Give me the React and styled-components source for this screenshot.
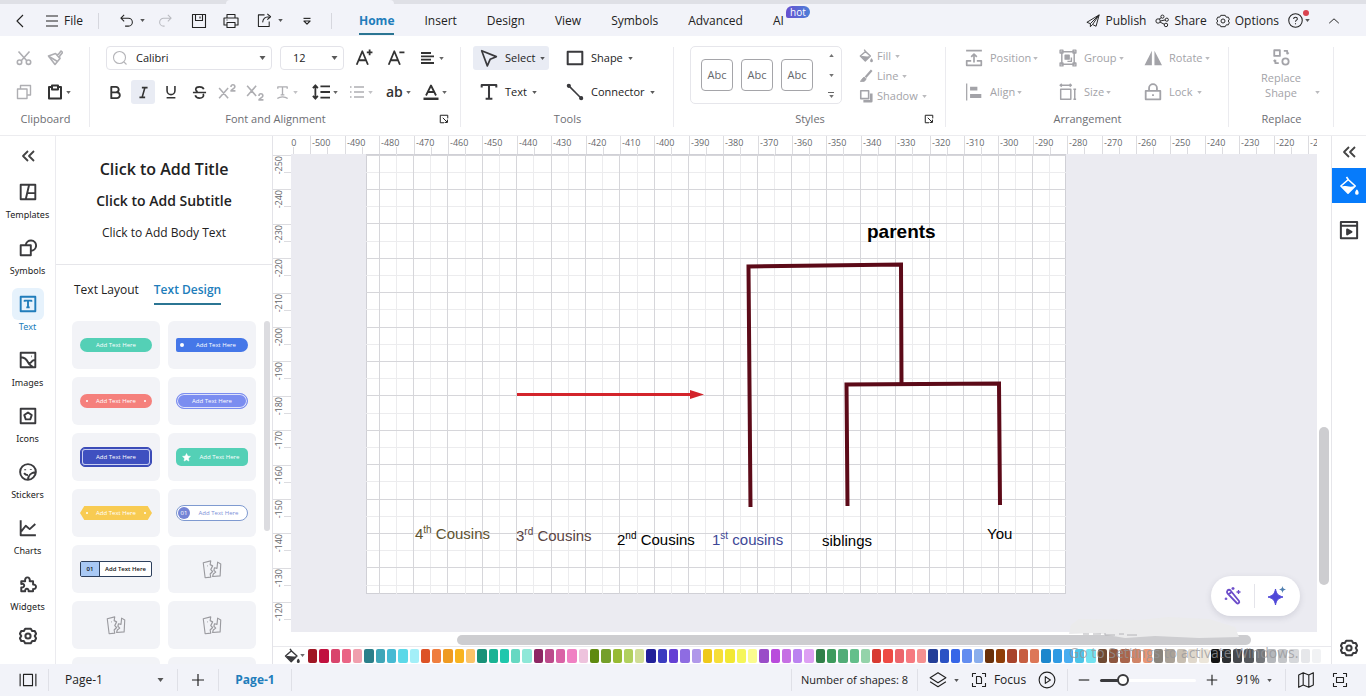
import React, { useState } from 'react';
import styled, { createGlobalStyle, css } from 'styled-components';

/* ---------- icons, all drawn on a 16 x 16 box ---------- */

const ICONS = {
  back: <path d="M11 2 5 8l6 6" />,
  menu: <path d="M2 3h12M2 8h12M2 13h12" />,
  undo: <path d="M5.5 2 2 5.5 5.5 9M2 5.5h8a4 4 0 0 1 0 8.5H6.5" />,
  redo: <path d="M10.5 2 14 5.5 10.5 9M14 5.5H6A4 4 0 0 0 6 14h1" />,
  save: <path d="M1.5 1.5h13v13h-13zM4.5 1.5v6h7v-6M9 3.5v2" />,
  print: <path d="M4 5V1.5h8V5M4 12H1V5h14v7h-3M4 9.5h8v5H4zM3.5 7h1" />,
  export: <path d="M8 2H1.500v12.500h11.500V9M6 10c.3-4 2.500-6 7-6M11 1l3.500 3L11 7" />,
  customize: (
    <>
      <path d="M4 5h8" />
      <path d="m4.500 8 3.500 3.500L11.500 8z" />
    </>
  ),
  publish: <path d="M15 1 1 9.500l4 1.500v3.500l2.500-2.500 4 2zM15 1 5 11M7.500 12 15 1" />,
  share: (
    <>
      <circle cx="3.500" cy="8" r="2.500" />
      <circle cx="12.500" cy="12.500" r="2" />
      <circle cx="8.500" cy="3" r="1.800" />
      <circle cx="13.500" cy="6.500" r="1.800" />
      <path d="m6 8 5.700-1.200M5.700 9.200l5 2.600M4.700 5.800l2.500-1.500" />
    </>
  ),
  gear: (
    <>
      <path d="M5.500 1.500 4.300 3.600H2L.8 6 2 8 .8 10 2 12.400h2.300l1.200 2.100h5l1.200-2.100H14L15.200 10 14 8l1.200-2L14 3.600h-2.300l-1.200-2.100z" />
      <circle cx="8" cy="8" r="2.300" />
    </>
  ),
  help: (
    <>
      <circle cx="8" cy="8" r="7.200" />
      <path d="M6 6.400C6 5 7 4.500 8 4.500s2 .6 2 1.800c0 1.300-2 1.500-2 3M8 11v1" />
    </>
  ),
  up: <path d="m2.500 10.500 5.500-5 5.500 5" />,
  cut: (
    <>
      <path d="m2.500 1.500 8.500 9.500M13.500 1.500 5 11" />
      <circle cx="3.500" cy="12.200" r="2.200" />
      <circle cx="12.500" cy="12.200" r="2.200" />
    </>
  ),
  brush: (
    <>
      <path d="M1.500 6 8.500 3.500l4.500 5-5 6z" />
      <path d="m9.500 4.500 2-.2L14 1l1.500 1.500-2.800 3.500-.2 2.500M2 6.500l8.500 5" />
    </>
  ),
  copy: <path d="M1.500 5h9.500v9.500H1.500zM4.500 5V1.500h10V11H11" />,
  paste: <path d="M5 3H2v11.500h12V3h-3M5 1.500h6v4H5z" />,
  search: (
    <>
      <circle cx="7.500" cy="7.500" r="6" />
      <path d="m12 12 2.500 2.500" />
    </>
  ),
  fontUp: <path d="m1.500 14 5-12 5 12M3.300 10h6.400M13 .500v5M10.500 3h5" />,
  fontDown: <path d="m1.500 14 5-12 5 12M3.300 10h6.400M11 3h4.500" />,
  align: <path d="M1 3h10M1 6.300h13M1 9.600h10M1 13h13" />,
  bold: <path d="M3.500 2h5a2.900 2.900 0 0 1 0 5.800h-5zM3.500 7.800h6a3.100 3.100 0 0 1 0 6.200h-6z" />,
  italic: <path d="M6 2h7M3 14h7M9.700 2 6.300 14" />,
  underline: <path d="M3.500 1v5.500a4.500 4.500 0 0 0 9 0V1M3 14.500h10" />,
  strike: <path d="M12.500 4.500C12 2.500 10.300 2 8 2 5.500 2 4 3 4 4.800c0 1.200.8 1.900 2 2.400M1 8h14M12 9.500c1 2.800-.8 4.500-4 4.500-2.500 0-4-.9-4.500-3" />,
  sup: <path d="m1 4.500 8 9M9 4.500l-8 9M11.500 3.500c0-2.500 3.500-2.500 3.500 0 0 1.200-3.500 2.500-3.500 3.500H15.500" />,
  sub: <path d="m1 2.500 8 9M9 2.500l-8 9M11.500 11.500c0-2.500 3.500-2.500 3.500 0 0 1.200-3.500 2.500-3.500 3.500H15.500" />,
  textCurve: <path d="M3 4V2h10v2M8 2v8.500M6 10.500h4M2.500 14.500c3-2.500 8-2.500 11 0" />,
  spacing: <path d="M3 2v12M.800 4.500 3 2l2.200 2.500M.800 11.500 3 14l2.200-2.500M7.500 3H16M7.500 8H16M7.500 13H16" />,
  list: <path d="M1 3h1.500M1 8h1.500M1 13h1.500M5 3h10M5 8h10M5 13h10" />,
  fontColor: (
    <>
      <path d="m3 11.500 5-10 5 10M4.800 8h6.400" />
      <path d="M.500 14.800h15" strokeWidth="2.500" />
    </>
  ),
  cursor: <path d="m1.500 1.500 13 5.300-5.500 2.400L6.500 15z" />,
  rect: <path d="M1.500 2.500h13v11h-13z" />,
  text: <path d="M1.500 4V1.800h13V4M8 1.800V14M5 14h6" />,
  connector: (
    <>
      <path d="m3 3 10.500 10.500" strokeWidth="1.400" />
      <circle cx="2.500" cy="2.500" r="1.300" fill="currentColor" />
      <circle cx="13.500" cy="13.500" r="1.300" fill="currentColor" />
    </>
  ),
  bucket: (
    <>
      <path d="M6 .800 7.500 3l5.500 5-5.800 5.800L1.500 8 7.500 2.800" />
      <path d="M2 8.500c3-1.500 6 1 10.500-.5L7.200 13.500z" fill="currentColor" stroke="none" />
      <path d="M14.300 11.500c-1.300 2-.8 2.800 0 2.800s1.300-.8 0-2.800z" fill="currentColor" />
    </>
  ),
  pen: (
    <>
      <path d="m14.500 1.500-7 8" strokeWidth="2.500" />
      <path d="M6.500 9.500c-3 0-2.500 3-5 4.500 4 .8 6.500-.5 6.500-3z" fill="currentColor" />
    </>
  ),
  shadow: (
    <>
      <path d="M2 2h9v9H2z" />
      <path d="M5 14h9V5" strokeWidth="3" />
    </>
  ),
  position: <path d="M1 1.500h14M8 12V4.500M5.500 7 8 4.500 10.500 7M5.500 10.500h-4v4h13v-4h-4" />,
  group: (
    <>
      <path d="M2.500 2.500h11v11h-11z" />
      <path d="M5.500 5.500H9v3.500H5.500z" fill="currentColor" />
      <path d="M11 7.500v3.500H7.500" />
      <path d="M1 1h2.500v2.500H1zM12.500 1H15v2.500h-2.500zM1 12.500h2.500V15H1zM12.500 12.500H15V15h-2.500z" />
    </>
  ),
  rotate: (
    <>
      <path d="M7 1.500V14.500H.500z" fill="currentColor" stroke="none" />
      <path d="M9.300 1.500V14.500H16z" fill="currentColor" stroke="none" />
    </>
  ),
  alignLeft: (
    <>
      <path d="M1.500.500v15" />
      <path d="M4.500 5H11M4.500 11.500H14.500" strokeWidth="3.500" />
    </>
  ),
  size: <path d="M1.500 5.500h9v9h-9zM1 2h10M2.500.800 1 2l1.500 1.200M9.500.800 11 2 9.500 3.200M14 5.500v9M12.800 5.500h2.400M12.800 14.500h2.400" />,
  lock: <path d="M1.500 7h13v7.500h-13zM4.500 7V4.500a3.500 3.500 0 0 1 7 0V7M8 10v1.500" />,
  replace: (
    <>
      <path d="M2 2h5v5H2z" />
      <circle cx="12" cy="12" r="2.800" />
      <path d="M10.500 2.500h3v3M13.500 5.500l1.300-1.500M6 13.500H3v-3M3 10.500 1.500 12" />
    </>
  ),
  launcher: <path d="M8 14H2V2h12v5M6 6l7 7M13.500 9v4.500H9" />,
  collapse: <path d="M8 3 3 8l5 5M14 3 9 8l5 5" />,
  templates: <path d="M1.500 1.500h13v13h-13zM9 1.500 6 14.500M7.500 9h7" />,
  symbols: (
    <>
      <path d="M1.500 5.500H10.500v9h-9z" />
      <path d="M6 5.500a4.600 4.600 0 1 1 4.500 5" />
    </>
  ),
  textBox: (
    <>
      <path d="M1.500 1.500h13v13h-13z" />
      <path d="M5 6V5h6v1M8 5v6M6.500 11h3" />
    </>
  ),
  images: <path d="M1.500 1.500h13v13h-13zM2 5.500c3 .2 4.800 2 6 4.500s2.500 2.500 4 4M8.500 11c2 0 2.500-1 3-1.800s1.500-1.200 3-1.200M11 4.800h.500" />,
  iconsBox: <path d="M1.500 1.500h13v13h-13zM8 4.800l3.300 2.400-1.300 3.800H6L4.700 7.200z" />,
  stickers: (
    <>
      <path d="M15 8A7 7 0 1 0 8 15c0-3.500 2.500-6.500 7-7zM15 8c0 3.500-3.500 7-7 7" />
      <path d="M5.500 5.500v1M10.500 5.500v.8M4.500 9c.8 1.200 2 1.800 3.500 1.800" />
    </>
  ),
  charts: <path d="M1.500 1v13.500h13.500M2 11l4-5 3.500 3L14.500 4.500" />,
  widgets: <path d="M2 5.500h3.500C4.500 1 10.500 1 9.500 5.500h3v3c3.500-.5 3.500 4.500 0 4v2h-4c.5-3-3.500-3-3 0H2v-3.500c3.500.5 3.500-4 0-3z" />,
  pages: <path d="M4 3h8v10H4zM1 2.500v11M15 2.500v11" />,
  plus: <path d="M8 2v12M2 8h12" />,
  minus: <path d="M2 8h12" />,
  layers: <path d="m8 1.500 7 4.500-7 4.500L1 6zM1 9.500l7 4.500 7-4.500" />,
  focus: <path d="M1.500 5V1.500H5M11 1.500h3.500V5M14.500 11v3.500H11M5 14.500H1.500V11M5.500 4.500h3.500l1.500 1.500v5.500h-5z" />,
  play: (
    <>
      <circle cx="8" cy="8" r="7" />
      <path d="m6.500 5 4.500 3-4.500 3z" />
    </>
  ),
  map: <path d="m1.500 3.500 4-2 5 2 4-2v11l-4 2-5-2-4 2zM5.500 1.500v11M10.500 3.500v11" />,
  fit: <path d="M1.500 5V1.500H5M11 1.500h3.500V5M14.500 11v3.500H11M5 14.500H1.500V11M4.500 5.500h7v5h-7z" />,
  playBox: (
    <>
      <path d="M1.500 1.500h13v13h-13zM1.500 4.500h13" />
      <path d="m6.500 7.500 3.500 2-3.500 2z" fill="currentColor" />
    </>
  ),
  missing: <path d="m1 3 6-1.500-.500 3 2 1-1.500 3 1.500 1.500-2 2 .500 2.500-4.500.500zM10 7l2 .500.500-5L15 4l-.500 9.500-6 .500.500-2 2-1.500-1.500-1.500zM4 5.500h.500" />,
  star: <path d="m8 1 2 4.500 5 .500-3.700 3.300 1 5L8 12l-4.300 2.300 1-5L1 6l5-.500z" fill="currentColor" />,
};

const Svg = styled.svg`
  display: block;
  flex: none;
  width: ${(props) => props.$size}px;
  height: ${(props) => props.$size}px;
  fill: none;
  stroke: currentColor;
  stroke-width: ${(props) => props.$weight};
  stroke-linejoin: round;
`;

function Icon({ name, size = 16, weight = 1.1 }) {
  return (
    <Svg viewBox="0 0 16 16" $size={size} $weight={weight} aria-hidden="true">
      {ICONS[name]}
    </Svg>
  );
}

function Caret({ up, big }) {
  return (
    <CaretSvg viewBox="0 0 6 4" $big={big} aria-hidden="true">
      <path d={up ? 'M0 4h6L3 0z' : 'M0 0h6L3 4z'} />
    </CaretSvg>
  );
}

/* ---------- data ---------- */

const TABS = ['Home', 'Insert', 'Design', 'View', 'Symbols', 'Advanced', 'AI'];

const SIDE_ITEMS = [
  ['Templates', 'templates'],
  ['Symbols', 'symbols'],
  ['Text', 'textBox'],
  ['Images', 'images'],
  ['Icons', 'iconsBox'],
  ['Stickers', 'stickers'],
  ['Charts', 'charts'],
  ['Widgets', 'widgets'],
];

const DESIGNS = [
  'mint',
  'blue',
  'coral',
  'periwinkle',
  'indigo',
  'star',
  'ribbon',
  'numbered',
  'boxed',
  'none',
  'none',
  'none',
  'none',
  'none',
];

const SWATCHES = `
  9f1624 c1113f d9446c ea6485 f09fae 2b7f8a 3fa6b8 46bad3 5cd8e8 a3eff8
  dd5226 ef7e3f ef9a22 f8b31e fbc368 189178 1ab394 1fc7ad 66d8c2 8ee8d8
  8e2764 bc4a8b da62a6 f080c3 eec3dd 5f8a10 759f2a 97ba33 b1d05e d0dd96
  22209a 3b3bc0 6540d4 8e6ce2 b098ea efc91a f6de38 f2e833 f5f65a fbfb8e
  9a4dc8 b94bdc c66fe4 bb83f0 dda0f3 318049 3d9b5d 52ad78 63bf8b 94d3aa
  d83a32 ee4a44 ec656c f67980 f59090 253f98 2b52c4 3766e8 638df0 8aaeec
  6a310a 8f3e08 a8442c c75f42 dd7757 1d87cd 2f9ae3 48adf0 4cc4e8 73e2f0
  6f4a33 8d5640 a9654c d08467 ea9674 8a847c aaa298 c8bfb2 e0d8cc ece6da
  141414 2c2e31 46494d 54575b 75787c b5b8bc c4c6c9 d6d8db e6e7ea f1f2f4
`
  .trim()
  .split(/\s+/);

const range = (n) => Array.from({ length: n }, (_, i) => i);

// screen pixels per ten drawing units at 91% zoom
const STEP = 34.4;

// how many ruler labels fit beside the side panels and the toolbars
const columns = () => Math.floor((window.innerWidth - 305) / STEP) + 1;
const rows = () => Math.floor((window.innerHeight - 218) / STEP) + 1;

/* ---------- header ---------- */

function Header() {
  const [tab, setTab] = useState('Home');

  return (
    <>
      <WindowStrip>
        <WindowTab />
      </WindowStrip>
      <HeaderBar>
        <QuickButton $w={40} aria-label="Back">
          <Icon name="back" />
        </QuickButton>
        <FileButton>
          <Icon name="menu" />
          File
        </FileButton>
        <HeaderLine />
        <QuickButton $w={46} $end aria-label="Undo">
          <Icon name="undo" size={15} />
          <Caret />
        </QuickButton>
        <QuickButton $w={40} disabled aria-label="Redo">
          <Icon name="redo" size={15} />
        </QuickButton>
        <QuickButton $w={28} aria-label="Save">
          <Icon name="save" />
        </QuickButton>
        <QuickButton $w={36} aria-label="Print">
          <Icon name="print" />
        </QuickButton>
        <QuickButton $w={42} aria-label="Export">
          <Icon name="export" size={15} />
          <Caret />
        </QuickButton>
        <QuickButton $w={32} aria-label="Customize">
          <Icon name="customize" size={14} weight={1.3} />
        </QuickButton>
        <HeaderLine $gap />
        <Tabs>
          {TABS.map((name) => (
            <Tab key={name} $on={name === tab} onClick={() => setTab(name)}>
              {name}
              {name === 'AI' && <Hot>hot</Hot>}
            </Tab>
          ))}
        </Tabs>
        <HeaderActions>
          <Action>
            <Icon name="publish" size={14} />
            Publish
          </Action>
          <Action>
            <Icon name="share" size={14} />
            Share
          </Action>
          <Action>
            <Icon name="gear" size={14} />
            Options
          </Action>
          <HelpButton aria-label="Help">
            <Icon name="help" size={15} />
            <RedDot />
            <Caret />
          </HelpButton>
          <QuickButton $w={24} aria-label="Collapse ribbon">
            <Icon name="up" size={14} />
          </QuickButton>
        </HeaderActions>
      </HeaderBar>
    </>
  );
}

/* ---------- ribbon ---------- */

function Ribbon() {
  return (
    <RibbonBar>
      <Group $w={89}>
        <Rows>
          <Row $pad={11}>
            <Tool disabled aria-label="Cut">
              <Icon name="cut" weight={1.6} />
            </Tool>
            <ToolGap />
            <Tool disabled aria-label="Format painter">
              <Icon name="brush" weight={1.6} />
            </Tool>
          </Row>
          <Row $pad={11}>
            <Tool disabled aria-label="Copy">
              <Icon name="copy" weight={1.4} />
            </Tool>
            <ToolGap />
            <Tool $wide aria-label="Paste">
              <Icon name="paste" weight={2} />
              <Caret />
            </Tool>
          </Row>
        </Rows>
        <GroupName>Clipboard</GroupName>
      </Group>

      <Group $w={371}>
        <Rows>
          <Row $pad={16} $gap={8}>
            <Field $w={166}>
              <Pale>
                <Icon name="search" />
              </Pale>
              <FontInput aria-label="Font" defaultValue="Calibri" />
              <Caret big />
            </Field>
            <Field $w={64}>
              <PlainSelect aria-label="Font size" defaultValue="12">
                <option>11</option>
                <option>12</option>
                <option>14</option>
              </PlainSelect>
              <Caret big />
            </Field>
            <Tool aria-label="Increase font size">
              <Icon name="fontUp" size={18} weight={1.6} />
            </Tool>
            <Tool aria-label="Decrease font size">
              <Icon name="fontDown" size={18} weight={1.6} />
            </Tool>
            <Tool $wide aria-label="Paragraph alignment">
              <Icon name="align" weight={1.8} />
              <Caret />
            </Tool>
          </Row>
          <Row $pad={13} $gap={4}>
            <Tool aria-label="Bold">
              <Icon name="bold" size={15} weight={2} />
            </Tool>
            <Tool $on aria-label="Italic">
              <Icon name="italic" size={13} weight={2} />
            </Tool>
            <Tool aria-label="Underline">
              <Icon name="underline" size={14} weight={1.8} />
            </Tool>
            <Tool aria-label="Strikethrough">
              <Icon name="strike" size={15} weight={1.8} />
            </Tool>
            <Tool disabled aria-label="Superscript">
              <Icon name="sup" size={18} weight={1.4} />
            </Tool>
            <Tool disabled aria-label="Subscript">
              <Icon name="sub" size={18} weight={1.4} />
            </Tool>
            <Tool $wide disabled aria-label="Text direction">
              <Icon name="textCurve" size={15} weight={1.4} />
              <Caret />
            </Tool>
            <Tool $wide aria-label="Line spacing">
              <Icon name="spacing" size={18} weight={1.6} />
              <Caret />
            </Tool>
            <Tool $wide disabled aria-label="Bullets">
              <Icon name="list" weight={1.3} />
              <Caret />
            </Tool>
            <Tool $wide $strong>
              ab
              <Caret />
            </Tool>
            <Tool $wide aria-label="Font color">
              <Icon name="fontColor" weight={1.8} />
              <Caret />
            </Tool>
          </Row>
        </Rows>
        <GroupName>Font and Alignment</GroupName>
        <Launcher aria-label="Font settings">
          <Icon name="launcher" size={10} weight={1.6} />
        </Launcher>
      </Group>

      <Group $w={213}>
        <Rows>
          <Row $pad={12} $gap={10}>
            <Labelled $w={76} $on>
              <Icon name="cursor" size={18} weight={1.5} />
              Select
              <Caret />
            </Labelled>
            <Labelled>
              <Icon name="rect" weight={1.8} size={18} />
              Shape
              <Caret />
            </Labelled>
          </Row>
          <Row $pad={12} $gap={10}>
            <Labelled $w={76}>
              <Icon name="text" weight={1.8} size={18} />
              Text
              <Caret />
            </Labelled>
            <Labelled>
              <Icon name="connector" size={18} />
              Connector
              <Caret />
            </Labelled>
          </Row>
        </Rows>
        <GroupName>Tools</GroupName>
      </Group>

      <Group $w={272}>
        <StylesArea>
          <Gallery>
            <StyleBox>Abc</StyleBox>
            <StyleBox>Abc</StyleBox>
            <StyleBox>Abc</StyleBox>
            <GalleryArrows>
              <ArrowButton aria-label="Previous styles">
                <Caret up />
              </ArrowButton>
              <ArrowButton aria-label="Next styles">
                <Caret />
              </ArrowButton>
              <ArrowButton $more aria-label="More styles">
                <Caret />
              </ArrowButton>
            </GalleryArrows>
          </Gallery>
          <StyleList>
            <StyleItem disabled>
              <Icon name="bucket" size={14} weight={1.6} />
              Fill
              <Caret />
            </StyleItem>
            <StyleItem disabled>
              <Icon name="pen" size={14} />
              Line
              <Caret />
            </StyleItem>
            <StyleItem disabled>
              <Icon name="shadow" size={14} weight={1.8} />
              Shadow
              <Caret />
            </StyleItem>
          </StyleList>
        </StylesArea>
        <GroupName>Styles</GroupName>
        <Launcher aria-label="Style settings">
          <Icon name="launcher" size={10} weight={1.6} />
        </Launcher>
      </Group>

      <Group $w={283}>
        <Rows>
          <Row $pad={12}>
            <Labelled disabled $w={94} $tight>
              <Icon name="position" size={18} weight={1.5} />
              Position
              <Caret />
            </Labelled>
            <Labelled disabled $w={85} $tight>
              <Icon name="group" size={18} weight={1.3} />
              Group
              <Caret />
            </Labelled>
            <Labelled disabled $tight>
              <Icon name="rotate" size={18} />
              Rotate
              <Caret />
            </Labelled>
          </Row>
          <Row $pad={12}>
            <Labelled disabled $w={94} $tight>
              <Icon name="alignLeft" size={18} />
              Align
              <Caret />
            </Labelled>
            <Labelled disabled $w={85} $tight>
              <Icon name="size" size={18} weight={1.3} />
              Size
              <Caret />
            </Labelled>
            <Labelled disabled>
              <Icon name="lock" size={18} weight={1.6} />
              Lock
              <Caret />
            </Labelled>
          </Row>
        </Rows>
        <GroupName>Arrangement</GroupName>
      </Group>

      <Group $w={105}>
        <ReplaceButton disabled>
          <Icon name="replace" size={18} weight={1.6} />
          <ReplaceLabel>Replace Shape</ReplaceLabel>
          <Caret />
        </ReplaceButton>
        <GroupName>Replace</GroupName>
      </Group>
    </RibbonBar>
  );
}

/* ---------- left side ---------- */

function SideBar() {
  return (
    <Side>
      <SideTop $h={40} aria-label="Collapse">
        <Icon name="collapse" weight={1.8} />
      </SideTop>
      {SIDE_ITEMS.map(([name, icon]) => (
        <SideItem key={name} $on={name === 'Text'}>
          <SideIcon $on={name === 'Text'}>
            <Icon name={icon} size={18} weight={1.7} />
          </SideIcon>
          {name}
        </SideItem>
      ))}
      <SideGear aria-label="Settings">
        <Icon name="gear" size={18} weight={1.8} />
      </SideGear>
    </Side>
  );
}

function Design({ kind }) {
  if (kind === 'none') {
    return (
      <Card $empty>
        <Icon name="missing" size={20} weight={0.9} />
      </Card>
    );
  }
  return (
    <Card>
      <Banner $kind={kind}>
        {kind === 'blue' && <Bullet />}
        {(kind === 'coral' || kind === 'ribbon') && <Dot />}
        {kind === 'star' && <Icon name="star" size={9} />}
        {kind === 'numbered' && <Round>01</Round>}
        {kind === 'boxed' && <Square>01</Square>}
        <BannerText>Add Text Here</BannerText>
        {(kind === 'coral' || kind === 'ribbon') && <Dot />}
      </Banner>
    </Card>
  );
}

function TextPanel() {
  return (
    <Panel>
      <AddText>
        <AddTitle>Click to Add Title</AddTitle>
        <AddSubtitle>Click to Add Subtitle</AddSubtitle>
        <AddBody>Click to Add Body Text</AddBody>
      </AddText>
      <PanelTabs>
        <PanelTab>Text Layout</PanelTab>
        <PanelTab $on>Text Design</PanelTab>
      </PanelTabs>
      <DesignArea>
        <DesignGrid>
          {DESIGNS.map((kind, i) => (
            <Design key={i} kind={kind} />
          ))}
        </DesignGrid>
        <PanelThumb />
      </DesignArea>
    </Panel>
  );
}

/* ---------- drawing area ---------- */

function TopRuler() {
  return (
    <TopRulerSvg>
      {range(columns()).map((i) => {
        const x = Math.round(i * STEP) - 15;
        return (
          <g key={i}>
            <line x1={x + 0.5} x2={x + 0.5} y1="0" y2="18" />
            <line x1={x + 17.5} x2={x + 17.5} y1="11" y2="18" />
            <text x={x + 2} y="10">
              {i * 10 - 510}
            </text>
          </g>
        );
      })}
    </TopRulerSvg>
  );
}

function LeftRuler() {
  return (
    <LeftRulerSvg>
      {range(rows()).map((i) => {
        const y = Math.round(i * STEP) + 1;
        return (
          <g key={i}>
            <line x1="0" x2="18" y1={y + 0.5} y2={y + 0.5} />
            <line x1="11" x2="18" y1={y + 17.5} y2={y + 17.5} />
            <text transform={`translate(9 ${y + 1}) rotate(-90)`} textAnchor="end">
              {i * 10 - 250}
            </text>
          </g>
        );
      })}
    </LeftRulerSvg>
  );
}

function Sheet() {
  return (
    <Paper>
      <Drawing viewBox="0 0 700 440">
        <g stroke="#ececee" shapeRendering="crispEdges">
          {range(42).map((i) => (
            <line key={i} x1={13 + (i - 1) * (STEP / 2)} x2={13 + (i - 1) * (STEP / 2)} y2="440" />
          ))}
          {range(26).map((i) => (
            <line key={i} y1={1 + i * (STEP / 2)} y2={1 + i * (STEP / 2)} x2="700" />
          ))}
        </g>
        <g stroke="#d6d6da" shapeRendering="crispEdges">
          {range(20).map((i) => (
            <line key={i} x1={13 + i * STEP} x2={13 + i * STEP} y2="440" />
          ))}
          {range(13).map((i) => (
            <line key={i} y1={1 + i * STEP} y2={1 + i * STEP} x2="700" />
          ))}
        </g>
        <g fill="none" stroke="#5c0a18" strokeWidth="4">
          <path d="M384.500 353 382.500 112.500 535 110.500l.500 119" />
          <path d="M481.500 352 480.500 230.500 633 229.500l1 121.500" />
        </g>
        <path d="M151 240.500h176" stroke="#d3242b" strokeWidth="3" />
        <path d="m324 236 14 4.500-14 4.500z" fill="#d3242b" />
      </Drawing>
      <Note $x={501} $y={66} $big>
        parents
      </Note>
      <Note $x={49} $y={370} $color="#5e5330">
        4<sup>th</sup> Cousins
      </Note>
      <Note $x={150} $y={372} $color="#5a4444">
        3<sup>rd</sup> Cousins
      </Note>
      <Note $x={251} $y={376}>
        2<sup>nd</sup> Cousins
      </Note>
      <Note $x={346} $y={376} $color="#3c4796">
        1<sup>st</sup> cousins
      </Note>
      <Note $x={456} $y={377}>
        siblings
      </Note>
      <Note $x={621} $y={370}>
        You
      </Note>
    </Paper>
  );
}

function Workspace() {
  return (
    <Work>
      <TopRulerRow>
        <TopRuler />
      </TopRulerRow>
      <CanvasRow>
        <LeftRuler />
        <Canvas>
          <Sheet />
          <AiPill>
            <PillButton aria-label="AI wand">
              <svg width="20" height="20" viewBox="0 0 20 20" fill="none" stroke="#6b4bc9" strokeWidth="1.800">
                <path d="M4.500 4.500c1-1 2-1 3 0l8.500 10.500c1 1.500-1 3.200-2.300 2L4.500 7.500c-.8-1-.8-2 0-3zM5.500 8.500l3-2.500" />
                <path d="M10 1v3M8.500 2.500h3M15.500 4v4M13.500 6h4M3 11.500v2.500M1.700 12.800h2.600" strokeWidth="1.300" />
              </svg>
            </PillButton>
            <PillLine />
            <PillButton aria-label="AI assistant">
              <svg width="20" height="20" viewBox="0 0 20 20">
                <path d="M8.500 3c1 5 2.500 6.500 7.500 8-5 1.500-6.500 3-7.500 8-1-5-2.500-6.500-7.500-8 5-1.500 6.500-3 7.500-8z" fill="#5048d8" stroke="#5048d8" strokeLinejoin="round" />
                <path d="M15.500 0c.5 2.300 1.200 3 3.500 3.500-2.300.5-3 1.200-3.500 3.500-.5-2.300-1.200-3-3.500-3.500 2.300-.5 3-1.200 3.500-3.500z" fill="#4f7fb0" />
              </svg>
            </PillButton>
          </AiPill>
        </Canvas>
        <VScroll>
          <VThumb />
        </VScroll>
      </CanvasRow>
      <HScroll>
        <HThumb />
      </HScroll>
      <Palette>
        <PaletteButton aria-label="Fill color">
          <Icon name="bucket" weight={1.4} />
          <Caret />
        </PaletteButton>
        <Swatches>
          {SWATCHES.map((hex, i) => (
            <Swatch key={i} aria-label={`#${hex}`} style={{ background: `#${hex}` }} />
          ))}
        </Swatches>
      </Palette>
      <Watermark>
        <svg width="172" height="22" viewBox="0 0 172 22" aria-hidden="true">
          <path d="M2 8 10 2l60 1 30-3 40 2 26 8 4 10-40 1-44-2-30 2-30-5-26 1z" fill="#ebebec" />
          <path d="M14 17h6M24 17h8M36 16v2h10M50 17h5M58 18h10" stroke="#b4b4b8" fill="none" />
        </svg>
        <span>Go to Settings to activate Windows.</span>
      </Watermark>
    </Work>
  );
}

/* ---------- status bar ---------- */

function StatusBar() {
  const [zoom, setZoom] = useState(20);

  return (
    <Status>
      <StatusCell $w={49}>
        <IndentedButton aria-label="Page thumbnails">
          <Icon name="pages" size={18} weight={1} />
        </IndentedButton>
      </StatusCell>
      <StatusCell $w={129} $start={16}>
        <PageSelect aria-label="Page" defaultValue="Page-1">
          <option>Page-1</option>
        </PageSelect>
        <Caret big />
      </StatusCell>
      <StatusCell $w={41}>
        <StatusButton aria-label="Add page">
          <Icon name="plus" weight={1.2} />
        </StatusButton>
      </StatusCell>
      <StatusCell $w={73}>
        <PageTab href="#page-1">Page-1</PageTab>
      </StatusCell>
      <Spacer />
      <StatusCell $w={127} $line>
        <Count>Number of shapes: 8</Count>
      </StatusCell>
      <StatusCell $w={150}>
        <StatusButton aria-label="Layers">
          <Icon name="layers" size={18} weight={1} />
          <Caret />
        </StatusButton>
        <StatusButton>
          <Icon name="focus" size={16} />
          Focus
        </StatusButton>
        <StatusButton aria-label="Present">
          <Icon name="play" size={18} weight={1} />
        </StatusButton>
      </StatusCell>
      <StatusCell $w={218} $start={9}>
        <StatusButton aria-label="Zoom out">
          <Icon name="minus" size={14} weight={1.3} />
        </StatusButton>
        <Zoom
          type="range"
          aria-label="Zoom"
          value={zoom}
          onChange={(e) => setZoom(e.target.value)}
          style={{ '--fill': `${zoom}%` }}
        />
        <StatusButton aria-label="Zoom in">
          <Icon name="plus" size={14} weight={1.3} />
        </StatusButton>
        <IndentedButton>
          91%
          <Caret />
        </IndentedButton>
      </StatusCell>
      <StatusCell $w={80} $start={11} $last>
        <StatusButton aria-label="Overview">
          <Icon name="map" size={18} weight={1} />
        </StatusButton>
        <IndentedButton aria-label="Fit to window">
          <Icon name="fit" />
        </IndentedButton>
      </StatusCell>
    </Status>
  );
}

function App() {
  return (
    <>
      <GlobalStyle />
      <Window>
        <Header />
        <Ribbon />
        <Main>
          <SideBar />
          <TextPanel />
          <Workspace />
          <RightBar>
            <SideTop $h={32} aria-label="Expand">
              <Icon name="collapse" weight={1.8} />
            </SideTop>
            <RightButton $on aria-label="Fill">
              <Icon name="bucket" size={20} weight={1.3} />
            </RightButton>
            <RightButton aria-label="Slides">
              <Icon name="playBox" size={20} weight={1.6} />
            </RightButton>
            <Spacer />
            <SideGear aria-label="Settings">
              <Icon name="gear" size={18} weight={1.8} />
            </SideGear>
          </RightBar>
        </Main>
        <StatusBar />
      </Window>
    </>
  );
}

/* ---------- styles ---------- */

const GlobalStyle = createGlobalStyle`
  * {
    box-sizing: border-box;
  }

  body {
    margin: 0;
    color: #222;
    background: #fff;
    font: 12px/16px "Open Sans", "Noto Sans", sans-serif;
  }

  button,
  input,
  select {
    margin: 0;
    padding: 0;
    border: 0;
    background: none;
    color: inherit;
    font: inherit;
  }
`;

const row = css`
  display: flex;
  align-items: center;
`;

const Window = styled.div`
  display: flex;
  flex-direction: column;
  height: 100vh;
  overflow: hidden;
`;

const Spacer = styled.div`
  flex: 1;
`;

const CaretSvg = styled.svg`
  display: block;
  flex: none;
  width: ${(props) => (props.$big ? 7 : 5)}px;
  height: ${(props) => (props.$big ? 4 : 3)}px;
  fill: currentColor;
  opacity: 0.75;
`;

const WindowStrip = styled.div`
  flex: none;
  height: 4px;
  padding-left: 226px;
  background: #dfe0e6;
`;

const WindowTab = styled.div`
  width: 168px;
  height: 4px;
  border-radius: 4px 4px 0 0;
  background: #f2f3f9;
`;

const HeaderBar = styled.header`
  ${row}
  flex: none;
  height: 32px;
  padding-top: 1px;
  background: #f2f3f9;
`;

const HeaderLine = styled.div`
  width: 1px;
  height: 16px;
  margin-left: ${(props) => (props.$gap ? 8 : 0)}px;
  background: #d6d7de;
`;

const QuickButton = styled.button`
  ${row}
  justify-content: ${(props) => (props.$end ? 'flex-end' : 'center')};
  gap: 6px;
  width: ${(props) => props.$w}px;
  height: 31px;

  &:disabled {
    color: #b9bac0;
  }
`;

const FileButton = styled.button`
  ${row}
  gap: 4px;
  width: 58px;
  padding-left: 4px;
`;

const Tabs = styled.nav`
  ${row}
  gap: 30px;
  padding-left: 27px;
`;

const Tab = styled.button`
  position: relative;
  height: 31px;

  ${(props) =>
    props.$on &&
    css`
      color: #217dbb;
      font-weight: 700;

      &::after {
        content: '';
        position: absolute;
        left: 0;
        right: 0;
        bottom: 1px;
        height: 2px;
        background: #2b7593;
      }
    `}
`;

const Hot = styled.span`
  position: absolute;
  left: 13px;
  top: 1px;
  width: 24px;
  border-radius: 6px 6px 6px 2px;
  background: linear-gradient(90deg, #6750d0, #4c7fd8);
  color: #fff;
  font-size: 10px;
  line-height: 12px;
`;

const HeaderActions = styled.div`
  ${row}
  gap: 9px;
  margin-left: auto;
  padding-right: 20px;
`;

const Action = styled.button`
  ${row}
  gap: 5px;
`;

const HelpButton = styled.button`
  ${row}
  position: relative;
  gap: 2px;
  margin-right: 3px;
`;

const RedDot = styled.span`
  position: absolute;
  left: 15px;
  top: -3px;
  width: 6px;
  height: 6px;
  border-radius: 50%;
  background: #d9434f;
`;

const RibbonBar = styled.div`
  display: flex;
  flex: none;
  height: 100px;
  padding-left: 1px;
  border-bottom: 1px solid #ececef;
  background: #fff;
  font-size: 11px;
`;

const Group = styled.section`
  position: relative;
  display: flex;
  flex: none;
  flex-direction: column;
  width: ${(props) => props.$w}px;
  padding-top: 10px;

  &::after {
    content: '';
    position: absolute;
    right: 0;
    top: 11px;
    width: 1px;
    height: 80px;
    background: #ebebef;
  }
`;

const Rows = styled.div`
  display: flex;
  flex-direction: column;
  gap: 10px;
  height: 58px;
`;

const Row = styled.div`
  ${row}
  gap: ${(props) => props.$gap || 0}px;
  height: 24px;
  padding-left: ${(props) => props.$pad}px;
`;

const ToolGap = styled.div`
  width: 7px;
`;

const GroupName = styled.div`
  margin-top: 7px;
  color: #6d6e73;
  text-align: center;
`;

const Tool = styled.button`
  ${row}
  flex: none;
  justify-content: ${(props) => (props.$wide ? 'flex-start' : 'center')};
  gap: 3px;
  width: ${(props) => (props.$wide ? 33 : 24)}px;
  height: 24px;
  padding-left: ${(props) => (props.$wide ? 4 : 0)}px;
  border-radius: 3px;
  background: ${(props) => (props.$on ? '#e9ecf4' : 'none')};
  color: #333;
  ${(props) => props.$strong && 'font-size: 14px; font-weight: 600;'}

  &:disabled {
    color: #aeaeb2;
  }
`;

const Field = styled.div`
  ${row}
  gap: 8px;
  width: ${(props) => props.$w}px;
  height: 24px;
  padding: 0 5px;
  border: 1px solid #e3e3e9;
  border-radius: 4px;
`;

const Pale = styled.span`
  color: #b4b4b8;
`;

const FontInput = styled.input`
  flex: 1;
  min-width: 0;
`;

const PlainSelect = styled.select`
  flex: 1;
  padding-left: 7px;
  appearance: none;
`;

const Launcher = styled.button`
  position: absolute;
  right: 12px;
  bottom: 11px;
`;

const Labelled = styled.button`
  ${row}
  flex: none;
  gap: ${(props) => (props.$tight ? 2 : 5)}px;
  width: ${(props) => (props.$w ? `${props.$w}px` : 'auto')};
  height: 24px;
  padding-left: 7px;
  border-radius: 3px;
  background: ${(props) => (props.$on ? '#e9ecf4' : 'none')};

  & > svg:first-child {
    margin-right: ${(props) => (props.$tight ? 5 : 2)}px;
    color: #3a3a3d;
  }

  &:disabled,
  &:disabled > svg:first-child {
    color: #a3a3a8;
  }
`;

const StylesArea = styled.div`
  display: flex;
  gap: 17px;
  height: 58px;
  padding-left: 16px;
`;

const Gallery = styled.div`
  ${row}
  gap: 8px;
  width: 152px;
  padding-left: 10px;
  border: 1px solid #e6e6eb;
  border-radius: 5px;
`;

const StyleBox = styled.button`
  width: 32px;
  height: 32px;
  border: 1px solid #a5a5a9;
  border-radius: 4px;
  color: #66676b;
`;

const GalleryArrows = styled.div`
  display: flex;
  flex: 1;
  flex-direction: column;
  gap: 4px;
`;

const ArrowButton = styled.button`
  ${row}
  flex-direction: column;
  justify-content: center;
  gap: 2px;
  height: 16px;
  color: #444;

  &::before {
    content: '';
    display: ${(props) => (props.$more ? 'block' : 'none')};
    width: 6px;
    height: 1px;
    background: #666;
  }
`;

const StyleList = styled.div`
  display: flex;
  flex-direction: column;
  gap: 4px;
  padding-top: 2px;
`;

const StyleItem = styled.button`
  ${row}
  gap: 4px;
  height: 16px;

  &:disabled {
    color: #a3a3a8;
  }
`;

const ReplaceButton = styled.button`
  display: grid;
  grid-template-columns: 22px 60px 12px;
  justify-items: center;
  align-items: end;
  height: 58px;
  padding-bottom: 4px;

  & > svg:first-child {
    grid-column: 2;
    align-self: center;
  }

  & > svg:last-child {
    margin-bottom: 6px;
  }

  &:disabled {
    color: #a3a3a8;
  }
`;

const ReplaceLabel = styled.span`
  grid-column: 2;
  width: 50px;
  line-height: 15px;
`;

const Main = styled.main`
  display: flex;
  flex: 1;
  min-height: 0;
`;

const Side = styled.aside`
  display: flex;
  flex: none;
  flex-direction: column;
  width: 56px;
  border-right: 1px solid #ebebef;
`;

const SideTop = styled.button`
  ${row}
  flex: none;
  justify-content: center;
  height: ${(props) => props.$h}px;
  color: #444;
`;

const SideItem = styled.button`
  display: flex;
  flex: none;
  flex-direction: column;
  align-items: center;
  height: 56px;
  color: ${(props) => (props.$on ? '#217dbb' : '#222')};
  font-family: 'Noto Sans', sans-serif;
  font-size: 9px;
  line-height: 13px;
`;

const SideIcon = styled.span`
  display: grid;
  place-items: center;
  width: 32px;
  height: 32px;
  border-radius: 6px;
  background: ${(props) => (props.$on ? '#e6f2fc' : 'none')};
  color: ${(props) => (props.$on ? '#217dbb' : '#3a3a3d')};
`;

const SideGear = styled.button`
  ${row}
  flex: none;
  justify-content: center;
  height: 24px;
  color: #3a3a3d;
`;

const Panel = styled.section`
  display: flex;
  flex: none;
  flex-direction: column;
  width: 217px;
  border-right: 1px solid #e3e3e8;
`;

const AddText = styled.div`
  display: flex;
  flex: none;
  flex-direction: column;
  align-items: center;
  gap: 8px;
  height: 129px;
  padding-top: 21px;
  border-bottom: 1px solid #e6e6ea;
`;

const AddTitle = styled.button`
  font-size: 16px;
  font-weight: 600;
  line-height: 24px;
`;

const AddSubtitle = styled.button`
  font-size: 14px;
  font-weight: 600;
  line-height: 24px;
`;

const AddBody = styled.button`
  line-height: 24px;
`;

const PanelTabs = styled.div`
  display: flex;
  flex: none;
  gap: 15px;
  padding: 16px 0 16px 18px;
`;

const PanelTab = styled.button`
  height: 24px;
  padding-bottom: 4px;
  border-bottom: 2px solid ${(props) => (props.$on ? '#2b7593' : 'transparent')};
  ${(props) => props.$on && 'color: #217dbb; font-weight: 600;'}
`;

const DesignArea = styled.div`
  display: flex;
  flex: 1;
  gap: 8px;
  min-height: 0;
  padding-left: 16px;
  overflow: hidden;
`;

const DesignGrid = styled.div`
  display: grid;
  grid-template-columns: 88px 88px;
  grid-auto-rows: 48px;
  gap: 8px;
`;

const PanelThumb = styled.div`
  width: 6px;
  height: 210px;
  border-radius: 3px;
  background: #dcdce0;
`;

const Card = styled.button`
  display: grid;
  place-items: center;
  border-radius: 6px;
  background: #f2f3f7;
  color: ${(props) => (props.$empty ? '#9a9a9f' : '#fff')};
`;

const banners = {
  mint: css`
    border-radius: 8px;
    background: #54d0b6;
  `,
  blue: css`
    border-radius: 2px 7px 7px 2px;
    background: #4577e8;
  `,
  coral: css`
    border-radius: 7px;
    background: #f5807c;
  `,
  periwinkle: css`
    height: 16px;
    border: 1px solid #7b8df0;
    border-radius: 8px;
    background: #7b8df0;
    box-shadow: inset 0 0 0 1px #dfe3fb;
  `,
  indigo: css`
    height: 20px;
    border: 1px solid #3c4cb8;
    border-radius: 5px;
    background: #3f50c0;
    box-shadow: inset 0 0 0 1px #3c4cb8, inset 0 0 0 2px #c9cff2;
  `,
  star: css`
    height: 18px;
    padding-left: 6px;
    border-radius: 5px;
    background: #54d0b6;
  `,
  ribbon: css`
    height: 14px;
    background: #f8cb52;
    clip-path: polygon(6% 0, 94% 0, 100% 50%, 94% 100%, 6% 100%, 0 50%);
  `,
  numbered: css`
    height: 16px;
    padding-left: 1px;
    border: 1px solid #7f9ad0;
    border-radius: 8px;
    background: #fff;
    color: #7e90d8;
  `,
  boxed: css`
    height: 16px;
    border: 1px solid #2d3f5c;
    border-radius: 2px;
    background: #fff;
    color: #111;
    font-weight: 600;
  `,
};

const Banner = styled.span`
  ${row}
  width: 72px;
  height: 14px;
  font-size: 6px;
  line-height: 8px;
  ${(props) => banners[props.$kind]}
`;

const BannerText = styled.span`
  flex: 1;
  text-align: center;
  white-space: nowrap;
`;

const Bullet = styled.span`
  width: 4px;
  height: 4px;
  margin-left: 4px;
  border-radius: 50%;
  background: #fff;
`;

const Dot = styled.span`
  width: 2px;
  height: 2px;
  margin: 0 6px;
  border-radius: 50%;
  background: #fff;
`;

const Round = styled.span`
  width: 12px;
  border-radius: 50%;
  background: #7484d6;
  color: #fff;
  line-height: 12px;
`;

const Square = styled.span`
  width: 19px;
  border-right: 1px solid #2d3f5c;
  background: #a9c9f5;
  line-height: 14px;
`;

const Work = styled.section`
  position: relative;
  display: flex;
  flex: 1;
  flex-direction: column;
  min-width: 0;
`;

const TopRulerRow = styled.div`
  flex: none;
  height: 18px;
  padding: 0 14px 0 18px;
`;

const rulerDrawing = css`
  display: block;
  fill: #66676b;
  stroke: none;
  font-size: 9px;

  line {
    stroke: #dcdce0;
  }
`;

const TopRulerSvg = styled.svg`
  ${rulerDrawing}
  width: 100%;
  height: 18px;
`;

const LeftRulerSvg = styled.svg`
  ${rulerDrawing}
  flex: none;
  width: 18px;
  height: 100%;
`;

const CanvasRow = styled.div`
  display: flex;
  flex: 1;
  min-height: 0;
`;

const Canvas = styled.div`
  position: relative;
  flex: 1;
  min-width: 0;
  overflow: hidden;
  background: #ebebf1;
`;

const Paper = styled.div`
  position: absolute;
  left: 75px;
  top: 0;
  width: 700px;
  height: 440px;
  background: #fff;
  box-shadow: inset 0 0 0 1px #d0d0d6;
`;

const Drawing = styled.svg`
  display: block;
  width: 100%;
  height: 100%;
`;

const Note = styled.div`
  position: absolute;
  left: ${(props) => props.$x}px;
  top: ${(props) => props.$y}px;
  color: ${(props) => props.$color || '#000'};
  font-family: 'Liberation Sans', Arial, sans-serif;
  font-size: ${(props) => (props.$big ? 19 : 15)}px;
  font-weight: ${(props) => (props.$big ? 700 : 400)};
  line-height: ${(props) => (props.$big ? 24 : 20)}px;
  white-space: nowrap;

  sup {
    font-size: 10px;
    line-height: 0;
  }
`;

const AiPill = styled.div`
  ${row}
  position: absolute;
  right: 17px;
  bottom: 16px;
  width: 89px;
  height: 40px;
  padding-right: 2px;
  border-radius: 20px;
  background: #fff;
  box-shadow: 0 2px 6px rgba(60, 60, 90, 0.15);
`;

const PillButton = styled.button`
  display: grid;
  flex: 1;
  place-items: center;
`;

const PillLine = styled.div`
  width: 1px;
  height: 24px;
  background: #e4e4ea;
`;

const VScroll = styled.div`
  flex: none;
  width: 14px;
  padding: 273px 2px 0;
`;

const VThumb = styled.div`
  width: 10px;
  height: 158px;
  border-radius: 5px;
  background: #cdcdd0;
`;

const HScroll = styled.div`
  flex: none;
  height: 15px;
  padding: 3px 80px 0 184px;
  border-bottom: 1px solid #e9e9ed;
`;

const HThumb = styled.div`
  height: 10px;
  border-radius: 5px;
  background: #cdcdd0;
`;

const Palette = styled.div`
  ${row}
  flex: none;
  height: 17px;
  padding-right: 10px;
`;

const PaletteButton = styled.button`
  ${row}
  flex: none;
  width: 35px;
  padding-left: 11px;
  color: #3a3a3d;
`;

const Swatches = styled.div`
  display: flex;
  flex: 1;
  gap: 2px;
`;

const Swatch = styled.button`
  flex: 1;
  height: 14px;
  border-radius: 2px;
`;

const Watermark = styled.div`
  position: absolute;
  right: 22px;
  bottom: 1px;
  width: 240px;
  color: rgba(150, 150, 154, 0.75);
  font-size: 14px;
  line-height: 20px;
  white-space: nowrap;
  pointer-events: none;

  svg {
    display: block;
    margin-bottom: 4px;
  }
`;

const RightBar = styled.aside`
  display: flex;
  flex: none;
  flex-direction: column;
  width: 35px;
  padding-bottom: 4px;
  border-left: 1px solid #e6e6ea;
`;

const RightButton = styled.button`
  display: grid;
  place-items: center;
  height: 35px;
  margin-bottom: 9px;
  ${(props) => (props.$on ? 'background: #067bfb; color: #fff;' : 'color: #3a3a3d;')}
`;

const Status = styled.footer`
  ${row}
  flex: none;
  height: 32px;
  background: #f2f3f9;
`;

const StatusCell = styled.div`
  ${row}
  flex: none;
  justify-content: ${(props) => (props.$start ? 'flex-start' : 'space-evenly')};
  gap: ${(props) => (props.$start ? 9 : 0)}px;
  width: ${(props) => props.$w}px;
  height: 22px;
  padding-left: ${(props) => props.$start || 0}px;
  border-right: ${(props) => (props.$last ? 0 : '1px solid #dfe0e7')};
  border-left: ${(props) => (props.$line ? '1px solid #dfe0e7' : 0)};
`;

const StatusButton = styled.button`
  ${row}
  gap: 7px;
`;

const IndentedButton = styled(StatusButton)`
  margin-left: 8px;
`;

const PageSelect = styled.select`
  width: 83px;
  appearance: none;
`;

const PageTab = styled.a`
  color: #217dbb;
  font-weight: 700;
  text-decoration: none;
`;

const Count = styled.span`
  font-size: 11px;
`;

const Zoom = styled.input`
  width: 96px;
  height: 14px;
  appearance: none;

  &::-webkit-slider-runnable-track {
    height: 3px;
    border-radius: 2px;
    background: linear-gradient(90deg, #3a3a3d var(--fill), #fff var(--fill));
  }

  &::-webkit-slider-thumb {
    width: 12px;
    height: 12px;
    margin-top: -5px;
    border: 2px solid #3a3a3d;
    border-radius: 50%;
    background: #fff;
    appearance: none;
  }
`;

export default App;
